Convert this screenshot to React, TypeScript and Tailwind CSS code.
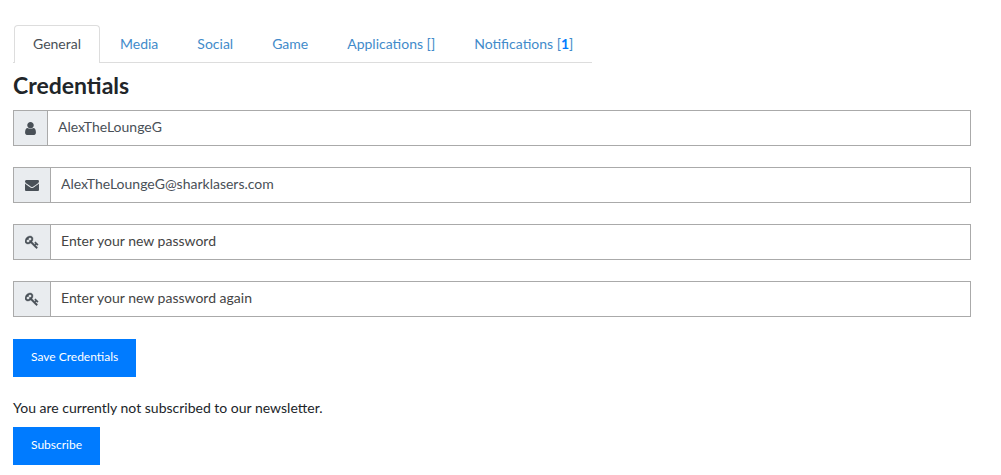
import { useId, useState } from "react";
import type { ReactNode } from "react";

const USER =
  "M1536 1399q0 109-62.5 187t-150.5 78h-854q-88 0-150.5-78t-62.5-187q0-85 8.5-160.5t31.5-152 58.5-131 94-89 134.5-34.5q131 128 313 128t313-128q76 0 134.5 34.5t94 89 58.5 131 31.5 152 8.5 160.5zm-256-887q0 159-112.5 271.5t-271.5 112.5-271.5-112.5-112.5-271.5 112.5-271.5 271.5-112.5 271.5 112.5 112.5 271.5z";
const ENVELOPE =
  "M1792 710v794q0 66-47 113t-113 47h-1472q-66 0-113-47t-47-113v-794q44 49 101 87 362 246 497 345 57 42 92.5 65.5t94.5 48 110 24.5h2q51 0 110-24.5t94.5-48 92.5-65.5q170-123 498-345 57-39 100-87zm0-294q0 79-49 151t-122 123q-376 261-468 325-10 7-42.5 31t-54 38.5-52 32.5-57.5 27-50 9h-2q-23 0-50-9t-57.5-27-52-32.5-54-38.5-42.5-31q-91-64-262-182.5t-205-142.5q-62-42-117-115.5t-55-136.5q0-78 41.5-130t118.5-52h1472q65 0 112.5 47t47.5 113z";
const KEY =
  "M832 512q0-80-56-136t-136-56-136 56-56 136q0 42 19 83-41-19-83-19-80 0-136 56t-56 136 56 136 136 56 136-56 56-136q0-42-19-83 41 19 83 19 80 0 136-56t56-136zm851 704q0 17-49 66t-66 49q-9 0-28.5-16t-36.5-33-38.5-40-24.5-26l-96 96 220 220q28 28 28 68 0 42-39 81t-81 39q-40 0-68-28l-671-671q-176 131-365 131-163 0-265.5-102.5t-102.5-265.5q0-160 95-313t248-248 313-95q163 0 265.5 102.5t102.5 265.5q0 189-131 365l355 355 96-96q-3-3-26-24.5t-40-38.5-33-36.5-16-28.5q0-17 49-66t66-49q13 0 23 10 6 6 46 44.5t82 79.5 86.5 86 73 78 28.5 41z";

function UserGlyph() {
  return (
    <svg viewBox="256 128 1280 1536" className="h-[13px] w-[11px]" fill="currentColor" aria-hidden="true">
      <path d={USER} />
    </svg>
  );
}

function EnvelopeGlyph() {
  return (
    <svg viewBox="0 0 1792 1792" className="h-3.5 w-3.5" fill="currentColor" aria-hidden="true">
      <path d={ENVELOPE} />
    </svg>
  );
}

function KeyGlyph() {
  return (
    <svg
      viewBox="0 0 1792 1792"
      className="h-3.5 w-3.5"
      fill="currentColor"
      stroke="currentColor"
      strokeWidth="50"
      aria-hidden="true"
    >
      <path d={KEY} />
    </svg>
  );
}

type FieldProps = {
  label: string;
  icon: ReactNode;
  type: string;
  value?: string;
  placeholder?: string;
};

function Field({ label, icon, type, value, placeholder }: FieldProps) {
  const id = useId();
  return (
    <div className="flex h-9 border border-[#aaaaaa]">
      <label
        htmlFor={id}
        aria-label={label}
        className="flex items-center border-r border-[#aaaaaa] bg-[#e9ecef] px-[11px] text-[#495057]"
      >
        {icon}
      </label>
      <input
        id={id}
        type={type}
        defaultValue={value}
        placeholder={placeholder}
        className="min-w-0 flex-1 bg-white px-2.5 pb-0.5 text-sm text-[#495057] outline-none placeholder:text-[#444444]"
      />
    </div>
  );
}

const TABS: { name: string; suffix?: ReactNode }[] = [
  { name: "General" },
  { name: "Media" },
  { name: "Social" },
  { name: "Game" },
  { name: "Applications", suffix: " []" },
  {
    name: "Notifications",
    suffix: (
      <>
        {" ["}
        <b className="font-bold text-[#007bff]">1</b>]
      </>
    ),
  },
];

const buttonClass =
  "h-[38px] self-start bg-[#007bff] px-[18px] pb-0.5 text-xs text-white";

export default function App() {
  const [active, setActive] = useState("General");
  return (
    <main className="flex flex-col bg-white pt-[25px] pr-[30px] pb-2.5 pl-[13px] font-['Lato',sans-serif] text-sm text-[#212529]">
      <div role="tablist" className="flex h-[38px] gap-px self-start border-b border-[#dddddd] pl-px">
        {TABS.map(({ name, suffix }) => (
          <button
            key={name}
            type="button"
            role="tab"
            aria-selected={active === name}
            onClick={() => setActive(name)}
            className={
              active === name
                ? "-mb-px rounded-t border border-b-0 border-[#dddddd] bg-white px-[18px] pb-0.5 whitespace-pre text-[#495057]"
                : "px-[19px] whitespace-pre text-[#428bca]"
            }
          >
            {name}
            {suffix}
          </button>
        ))}
      </div>

      <h1 className="mt-2 text-[23px] leading-7 font-bold">Credentials</h1>

      <form className="mt-[11px] flex flex-col" onSubmit={(e) => e.preventDefault()}>
        <div className="flex flex-col gap-[21px]">
          <Field label="Username" type="text" icon={<UserGlyph />} value="AlexTheLoungeG" />
          <Field label="Email" type="email" icon={<EnvelopeGlyph />} value="AlexTheLoungeG@sharklasers.com" />
          <Field label="New password" type="password" icon={<KeyGlyph />} placeholder="Enter your new password" />
          <Field
            label="Repeat new password"
            type="password"
            icon={<KeyGlyph />}
            placeholder="Enter your new password again"
          />
        </div>
        <button type="submit" className={`mt-[22px] ${buttonClass}`}>
          Save Credentials
        </button>
      </form>

      <p className="mt-[21px] leading-5">You are currently not subscribed to our newsletter.</p>
      <button type="button" className={`mt-[9px] ${buttonClass}`}>
        Subscribe
      </button>
    </main>
  );
}
